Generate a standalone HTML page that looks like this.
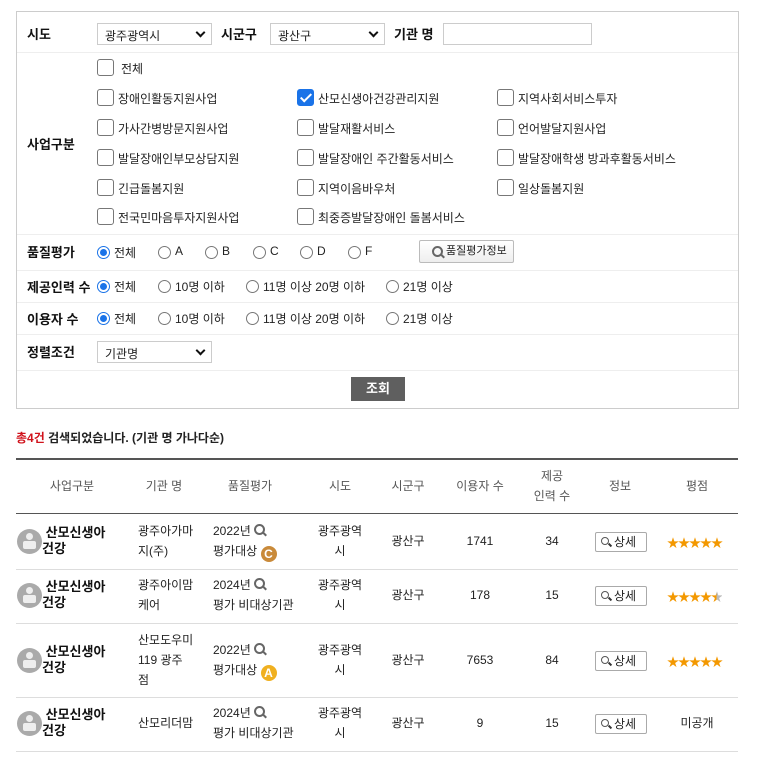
<!DOCTYPE html>
<html><head><meta charset="utf-8"><style>
*{box-sizing:border-box;margin:0;padding:0}
body{width:761px;height:766px;background:#fff;font-family:"Liberation Sans","Noto Sans CJK KR",sans-serif;font-size:12px;color:#222;position:relative;overflow:hidden}
.a{position:absolute;white-space:nowrap}
.panel{position:absolute;left:16px;top:11px;width:723px;height:398px;border:1px solid #ccc}
.sep{position:absolute;left:17px;width:721px;height:1px;background:#eee}
.lbl{font-weight:bold;font-size:13px;color:#111}
.sel{position:absolute;height:22px;border:1px solid #ccc;background:#fff;font-size:12px;padding:3px 0 0 7px}
.sel:after{content:"";position:absolute;right:7px;top:5px;width:5px;height:5px;border-right:2px solid #111;border-bottom:2px solid #111;transform:rotate(45deg)}
.sel.inp:after{display:none}
.cb{position:absolute;width:17px;height:17px;border:1px solid #777;border-radius:3px;background:#fff}
.cb.on{background:#1a73e8;border-color:#1a73e8}
.cb.on:after{content:"";position:absolute;left:5px;top:1px;width:4px;height:9px;border-right:2px solid #fff;border-bottom:2px solid #fff;transform:rotate(45deg)}
.ct{position:absolute;font-size:12px;white-space:nowrap}
.rd{position:absolute;width:13px;height:13px;border:1px solid #777;border-radius:50%;background:#fff}
.rd.on{border:1px solid #1a73e8}
.rd.on:after{content:"";position:absolute;left:2px;top:2px;width:7px;height:7px;border-radius:50%;background:#1a73e8}
.c{position:absolute;text-align:center;transform:translateX(-50%);font-size:12px;line-height:20px;white-space:nowrap}
.h{color:#555;font-size:12px}
.line{position:absolute;left:16px;width:722px;height:1px;background:#ddd}
.av{position:absolute;left:17px;width:25px;height:25px;border-radius:50%;background:#aaa}
.av:before{content:"";position:absolute;left:9px;top:4px;width:7px;height:7px;border-radius:50%;background:#eee}
.av:after{content:"";position:absolute;left:6px;top:12px;width:13px;height:8px;background:#eee;border-radius:2px}
.biz{position:absolute;left:42px;font-weight:bold;font-size:13px;line-height:16px;color:#111}
.btn{position:absolute;left:595px;width:52px;height:20px;border:1px solid #aaa;border-radius:2px;font-size:12px;line-height:18px;padding-left:18px;background:#fff}
.btn:before{content:"";position:absolute;left:5px;top:4px;width:6px;height:6px;border:1.5px solid #555;border-radius:50%}
.btn:after{content:"";position:absolute;left:12px;top:11px;width:4px;height:2px;background:#333;transform:rotate(45deg)}
.stars{position:absolute;left:667px;color:#f39800;font-size:12px;letter-spacing:-1px}
.mag{display:inline-block;position:relative;width:12px;height:12px;vertical-align:-1px}
.mag:before{content:"";position:absolute;left:0;top:0;width:7px;height:7px;border:2px solid #666;border-radius:50%}
.mag:after{content:"";position:absolute;left:8px;top:9px;width:5px;height:2px;background:#666;transform:rotate(45deg)}
.badge{display:inline-block;width:16px;height:16px;border-radius:50%;color:#fff;font-weight:bold;font-size:12px;line-height:16px;text-align:center;vertical-align:-3px}
</style></head><body>
<div class="panel"></div>
<div class="a lbl" style="left:27px;top:24px">시도</div>
<div class="sel" style="left:97px;top:23px;width:115px">광주광역시</div>
<div class="a lbl" style="left:221px;top:24px">시군구</div>
<div class="sel" style="left:270px;top:23px;width:115px">광산구</div>
<div class="a lbl" style="left:394px;top:24px">기관 명</div>
<div class="sel inp" style="left:443px;top:23px;width:149px"></div>
<div class="sep" style="top:52px"></div>

<div class="a lbl" style="left:27px;top:134px">사업구분</div>
<div class="cb" style="left:97px;top:59px"></div><div class="ct" style="left:121px;top:60px">전체</div>
<div class="cb" style="left:97px;top:89px"></div><div class="ct" style="left:118px;top:90px">장애인활동지원사업</div>
<div class="cb on" style="left:297px;top:89px"></div><div class="ct" style="left:318px;top:90px">산모신생아건강관리지원</div>
<div class="cb" style="left:497px;top:89px"></div><div class="ct" style="left:518px;top:90px">지역사회서비스투자</div>
<div class="cb" style="left:97px;top:119px"></div><div class="ct" style="left:118px;top:120px">가사간병방문지원사업</div>
<div class="cb" style="left:297px;top:119px"></div><div class="ct" style="left:318px;top:120px">발달재활서비스</div>
<div class="cb" style="left:497px;top:119px"></div><div class="ct" style="left:518px;top:120px">언어발달지원사업</div>
<div class="cb" style="left:97px;top:149px"></div><div class="ct" style="left:118px;top:150px">발달장애인부모상담지원</div>
<div class="cb" style="left:297px;top:149px"></div><div class="ct" style="left:318px;top:150px">발달장애인 주간활동서비스</div>
<div class="cb" style="left:497px;top:149px"></div><div class="ct" style="left:518px;top:150px">발달장애학생 방과후활동서비스</div>
<div class="cb" style="left:97px;top:179px"></div><div class="ct" style="left:118px;top:180px">긴급돌봄지원</div>
<div class="cb" style="left:297px;top:179px"></div><div class="ct" style="left:318px;top:180px">지역이음바우처</div>
<div class="cb" style="left:497px;top:179px"></div><div class="ct" style="left:518px;top:180px">일상돌봄지원</div>
<div class="cb" style="left:97px;top:208px"></div><div class="ct" style="left:118px;top:209px">전국민마음투자지원사업</div>
<div class="cb" style="left:297px;top:208px"></div><div class="ct" style="left:318px;top:209px">최중증발달장애인 돌봄서비스</div>
<div class="sep" style="top:234px"></div>

<div class="a lbl" style="left:27px;top:242px">품질평가</div>
<div class="rd on" style="left:97px;top:246px"></div><div class="ct" style="left:114px;top:244px">전체</div>
<div class="rd" style="left:158px;top:246px"></div><div class="ct" style="left:175px;top:244px">A</div>
<div class="rd" style="left:205px;top:246px"></div><div class="ct" style="left:222px;top:244px">B</div>
<div class="rd" style="left:253px;top:246px"></div><div class="ct" style="left:270px;top:244px">C</div>
<div class="rd" style="left:300px;top:246px"></div><div class="ct" style="left:317px;top:244px">D</div>
<div class="rd" style="left:348px;top:246px"></div><div class="ct" style="left:365px;top:244px">F</div>
<div class="a" style="left:419px;top:240px;width:95px;height:23px;border:1px solid #bbb;border-radius:2px;background:linear-gradient(#fff,#eee);font-size:11px;line-height:21px;padding-left:26px"><span class="mag" style="position:absolute;left:12px;top:5px"></span>품질평가정보</div>
<div class="sep" style="top:270px"></div>

<div class="a lbl" style="left:27px;top:277px">제공인력 수</div>
<div class="rd on" style="left:97px;top:280px"></div><div class="ct" style="left:114px;top:278px">전체</div>
<div class="rd" style="left:158px;top:280px"></div><div class="ct" style="left:175px;top:278px">10명 이하</div>
<div class="rd" style="left:246px;top:280px"></div><div class="ct" style="left:263px;top:278px">11명 이상 20명 이하</div>
<div class="rd" style="left:386px;top:280px"></div><div class="ct" style="left:403px;top:278px">21명 이상</div>
<div class="sep" style="top:302px"></div>

<div class="a lbl" style="left:27px;top:309px">이용자 수</div>
<div class="rd on" style="left:97px;top:312px"></div><div class="ct" style="left:114px;top:310px">전체</div>
<div class="rd" style="left:158px;top:312px"></div><div class="ct" style="left:175px;top:310px">10명 이하</div>
<div class="rd" style="left:246px;top:312px"></div><div class="ct" style="left:263px;top:310px">11명 이상 20명 이하</div>
<div class="rd" style="left:386px;top:312px"></div><div class="ct" style="left:403px;top:310px">21명 이상</div>
<div class="sep" style="top:334px"></div>

<div class="a lbl" style="left:27px;top:342px">정렬조건</div>
<div class="sel" style="left:97px;top:341px;width:115px">기관명</div>
<div class="sep" style="top:370px"></div>
<div class="a" style="left:351px;top:377px;width:54px;height:24px;background:#5f5f5f;color:#fff;font-weight:bold;font-size:13px;text-align:center;line-height:24px">조회</div>

<div class="a" style="left:16px;top:429px;font-size:12px;font-weight:bold"><span style="color:#d0121b">총4건</span> 검색되었습니다. (기관 명 가나다순)</div>

<div class="a" style="left:16px;top:458px;width:722px;height:2px;background:#555"></div>
<div class="c h" style="left:72px;top:476px">사업구분</div>
<div class="c h" style="left:164px;top:476px">기관 명</div>
<div class="c h" style="left:250px;top:476px">품질평가</div>
<div class="c h" style="left:340px;top:476px">시도</div>
<div class="c h" style="left:408px;top:476px">시군구</div>
<div class="c h" style="left:480px;top:476px">이용자 수</div>
<div class="c h" style="left:552px;top:466px">제공<br>인력 수</div>
<div class="c h" style="left:620px;top:476px">정보</div>
<div class="c h" style="left:697px;top:476px">평점</div>
<div class="a" style="left:16px;top:513px;width:722px;height:1px;background:#555"></div>

<!-- row1 -->
<div class="av" style="top:529px"></div><div class="biz" style="top:525px">&nbsp;산모신생아<br>건강</div>
<div class="a" style="left:138px;top:521px;font-size:12px;line-height:20px">광주아가마<br>지(주)</div>
<div class="a" style="left:213px;top:521px;font-size:12px;line-height:20px">2022년 <span class="mag"></span><br>평가대상 <span class="badge" style="background:#c98a3a">C</span></div>
<div class="c" style="left:340px;top:521px">광주광역<br>시</div>
<div class="c" style="left:408px;top:531px">광산구</div>
<div class="c" style="left:480px;top:531px">1741</div>
<div class="c" style="left:552px;top:531px">34</div>
<div class="btn" style="top:532px">상세</div>
<div class="stars" style="top:534px">★★★★★</div>
<div class="line" style="top:569px"></div>
<!-- row2 -->
<div class="av" style="top:583px"></div><div class="biz" style="top:579px">&nbsp;산모신생아<br>건강</div>
<div class="a" style="left:138px;top:575px;font-size:12px;line-height:20px">광주아이맘<br>케어</div>
<div class="a" style="left:213px;top:575px;font-size:12px;line-height:20px">2024년 <span class="mag"></span><br>평가 비대상기관</div>
<div class="c" style="left:340px;top:575px">광주광역<br>시</div>
<div class="c" style="left:408px;top:585px">광산구</div>
<div class="c" style="left:480px;top:585px">178</div>
<div class="c" style="left:552px;top:585px">15</div>
<div class="btn" style="top:586px">상세</div>
<div class="stars" style="top:588px">★★★★<span style="background:linear-gradient(90deg,#f39800 50%,#bbb 50%);-webkit-background-clip:text;color:transparent">★</span></div>
<div class="line" style="top:623px"></div>
<!-- row3 -->
<div class="av" style="top:648px"></div><div class="biz" style="top:644px">&nbsp;산모신생아<br>건강</div>
<div class="a" style="left:138px;top:630px;font-size:12px;line-height:20px">산모도우미<br>119 광주<br>점</div>
<div class="a" style="left:213px;top:640px;font-size:12px;line-height:20px">2022년 <span class="mag"></span><br>평가대상 <span class="badge" style="background:#f0b020">A</span></div>
<div class="c" style="left:340px;top:640px">광주광역<br>시</div>
<div class="c" style="left:408px;top:650px">광산구</div>
<div class="c" style="left:480px;top:650px">7653</div>
<div class="c" style="left:552px;top:650px">84</div>
<div class="btn" style="top:651px">상세</div>
<div class="stars" style="top:653px">★★★★★</div>
<div class="line" style="top:697px"></div>
<!-- row4 -->
<div class="av" style="top:711px"></div><div class="biz" style="top:707px">&nbsp;산모신생아<br>건강</div>
<div class="a" style="left:138px;top:713px;font-size:12px;line-height:20px">산모리더맘</div>
<div class="a" style="left:213px;top:703px;font-size:12px;line-height:20px">2024년 <span class="mag"></span><br>평가 비대상기관</div>
<div class="c" style="left:340px;top:703px">광주광역<br>시</div>
<div class="c" style="left:408px;top:713px">광산구</div>
<div class="c" style="left:480px;top:713px">9</div>
<div class="c" style="left:552px;top:713px">15</div>
<div class="btn" style="top:714px">상세</div>
<div class="c" style="left:697px;top:713px">미공개</div>
<div class="line" style="top:751px"></div>
</body></html>
